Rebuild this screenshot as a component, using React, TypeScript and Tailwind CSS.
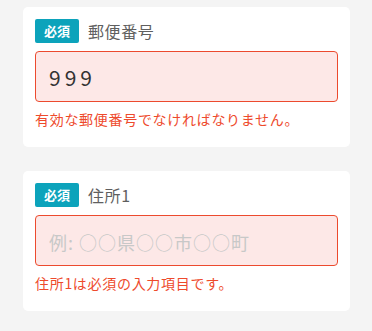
import React from 'react';

type FieldProps = {
  label: string;
  value?: string;
  placeholder?: string;
  error: string;
};

function Field({ label, value, placeholder, error }: FieldProps) {
  return (
    <div className="bg-white rounded-[5px] px-3 pt-3 pb-[18px]">
      <div className="flex items-center gap-[9px] h-6">
        <span className="bg-[#0ca3bb] text-white text-[13px] font-bold rounded-[2px] w-11 h-6 flex items-center justify-center">
          必須
        </span>
        <span className="text-[16px] text-[#5f5f5f] tracking-[0.6px]">{label}</span>
      </div>
      <input
        readOnly
        defaultValue={value}
        placeholder={placeholder}
        className="mt-2 block w-full h-[51px] rounded-[4px] border border-[#ec4a2e] bg-[#fde8e7] px-[13px] text-[21px] tracking-[4px] text-[#333] placeholder:text-[18px] placeholder:tracking-[1px] placeholder:text-[#c8c8c8] outline-none"
      />
      <p className="mt-[7px] text-[14px] leading-[20px] tracking-[0.7px] text-[#ee4a2c]">{error}</p>
    </div>
  );
}

export default function App() {
  return (
    <div
      className="min-h-[331px] bg-[#f4f4f4] pl-[23px] pr-[22px] pt-[7px] flex flex-col gap-[24px]"
      style={{ fontFamily: '"Noto Sans CJK JP", "Noto Sans", sans-serif' }}
    >
      <Field label="郵便番号" value="999" error="有効な郵便番号でなければなりません。" />
      <Field label="住所1" placeholder="例: ○○県○○市○○町" error="住所1は必須の入力項目です。" />
    </div>
  );
}
